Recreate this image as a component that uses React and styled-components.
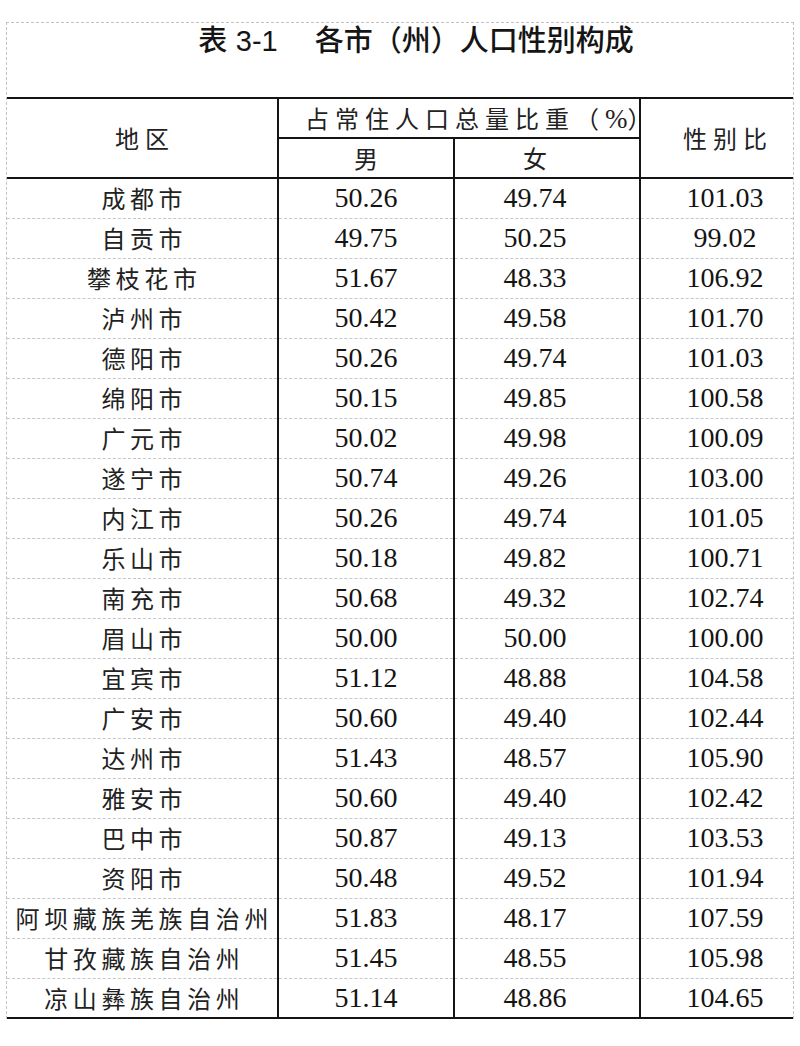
import React from "react";
import styled, { createGlobalStyle } from "styled-components";

const GlobalStyle = createGlobalStyle`
  html, body {
    margin: 0;
    padding: 0;
    background: #ffffff;
  }
  body {
    font-family: "Noto Sans CJK SC", "Noto Sans", sans-serif;
    color: #1b1b1b;
  }
`;

const Page = styled.div`
  padding: 22px 0 0 6px;
  width: 800px;
  box-sizing: border-box;
`;

const Frame = styled.div`
  width: 788px;
  box-sizing: border-box;
  border-top: 1px dashed #c2c2c2;
  border-left: 1px dashed #c2c2c2;
  border-right: 1px dashed #c2c2c2;
`;

const Title = styled.h1`
  margin: 0;
  height: 74px;
  box-sizing: border-box;
  padding-left: 32px;
  line-height: 30px;
  text-align: center;
  font-family: "Noto Sans CJK SC", sans-serif;
  font-weight: 500;
  font-size: 29px;
  color: #151515;
  white-space: pre;
`;

const TitleNum = styled.span`
  font-family: "Liberation Sans", Arial, sans-serif;
  font-weight: 400;
  font-size: 29px;
  margin: 0 8px 0 2px;
`;

const Table = styled.table`
  width: 100%;
  border-collapse: collapse;
  table-layout: fixed;
  border-bottom: 2px solid #151515;
`;

const Row = styled.tr`
  height: 40px;
`;

const HeadCell = styled.th`
  padding: 0 ${(p) => p.$padR || 0}px 0 ${(p) => p.$padL || 0}px;
  font-family: "Noto Sans CJK SC", sans-serif;
  font-weight: 400;
  font-size: 24px;
  letter-spacing: ${(p) => p.$ls ?? 6}px;
  text-indent: ${(p) => p.$ls ?? 6}px;
  color: #222;
  text-align: center;
  vertical-align: middle;
  line-height: 28px;
  border-top: ${(p) => (p.$top ? "2px solid #151515" : "none")};
  border-bottom: 2px solid #151515;
  border-left: ${(p) => (p.$left ? "2px solid #151515" : "none")};
  white-space: nowrap;
`;

const Percent = styled.span`
  font-family: "Liberation Serif", serif;
  font-size: 27px;
  letter-spacing: 0;
`;

const BodyRow = styled.tr`
  height: 40px;
  & > td {
    border-top: 1px dashed #c6c6c6;
  }
  &:first-child > td {
    border-top: 2px solid #151515;
  }
`;

const RegionCell = styled.td`
  padding: 0;
  font-family: "Noto Sans CJK SC", sans-serif;
  font-size: 24px;
  letter-spacing: 4.6px;
  text-indent: 4.6px;
  color: #222;
  text-align: center;
  vertical-align: middle;
  line-height: 28px;
  white-space: nowrap;
`;

const NumCell = styled.td`
  padding: 0 ${(p) => p.$padR || 0}px 0 ${(p) => p.$padL || 0}px;
  font-family: "Liberation Serif", "Times New Roman", serif;
  font-size: 28px;
  color: #141414;
  text-align: center;
  vertical-align: middle;
  line-height: 30px;
  border-left: 2px solid #151515;
`;

const rows = [
  ["成都市", "50.26", "49.74", "101.03"],
  ["自贡市", "49.75", "50.25", "99.02"],
  ["攀枝花市", "51.67", "48.33", "106.92"],
  ["泸州市", "50.42", "49.58", "101.70"],
  ["德阳市", "50.26", "49.74", "101.03"],
  ["绵阳市", "50.15", "49.85", "100.58"],
  ["广元市", "50.02", "49.98", "100.09"],
  ["遂宁市", "50.74", "49.26", "103.00"],
  ["内江市", "50.26", "49.74", "101.05"],
  ["乐山市", "50.18", "49.82", "100.71"],
  ["南充市", "50.68", "49.32", "102.74"],
  ["眉山市", "50.00", "50.00", "100.00"],
  ["宜宾市", "51.12", "48.88", "104.58"],
  ["广安市", "50.60", "49.40", "102.44"],
  ["达州市", "51.43", "48.57", "105.90"],
  ["雅安市", "50.60", "49.40", "102.42"],
  ["巴中市", "50.87", "49.13", "103.53"],
  ["资阳市", "50.48", "49.52", "101.94"],
  ["阿坝藏族羌族自治州", "51.83", "48.17", "107.59"],
  ["甘孜藏族自治州", "51.45", "48.55", "105.98"],
  ["凉山彝族自治州", "51.14", "48.86", "104.65"],
];

export default function App() {
  return (
    <>
      <GlobalStyle />
      <Page>
        <Frame>
          <Title>
            {"表 "}
            <TitleNum>3-1</TitleNum>
            {"　各市（州）人口性别构成"}
          </Title>
          <Table>
            <colgroup>
              <col style={{ width: "271px" }} />
              <col style={{ width: "176px" }} />
              <col style={{ width: "186px" }} />
              <col style={{ width: "153px" }} />
            </colgroup>
            <thead>
              <Row>
                <HeadCell rowSpan={2} $top>
                  地区
                </HeadCell>
                <HeadCell colSpan={2} $top $left $ls={6} $padL={20}>
                  占常住人口总量比重（<Percent>%</Percent>）
                </HeadCell>
                <HeadCell rowSpan={2} $top $left $padL={16}>
                  性别比
                </HeadCell>
              </Row>
              <Row>
                <HeadCell $left>男</HeadCell>
                <HeadCell $left $padR={24}>
                  女
                </HeadCell>
              </Row>
            </thead>
            <tbody>
              {rows.map((r) => (
                <BodyRow key={r[0]}>
                  <RegionCell>{r[0]}</RegionCell>
                  <NumCell>{r[1]}</NumCell>
                  <NumCell $padR={24}>{r[2]}</NumCell>
                  <NumCell $padL={16}>{r[3]}</NumCell>
                </BodyRow>
              ))}
            </tbody>
          </Table>
        </Frame>
      </Page>
    </>
  );
}
